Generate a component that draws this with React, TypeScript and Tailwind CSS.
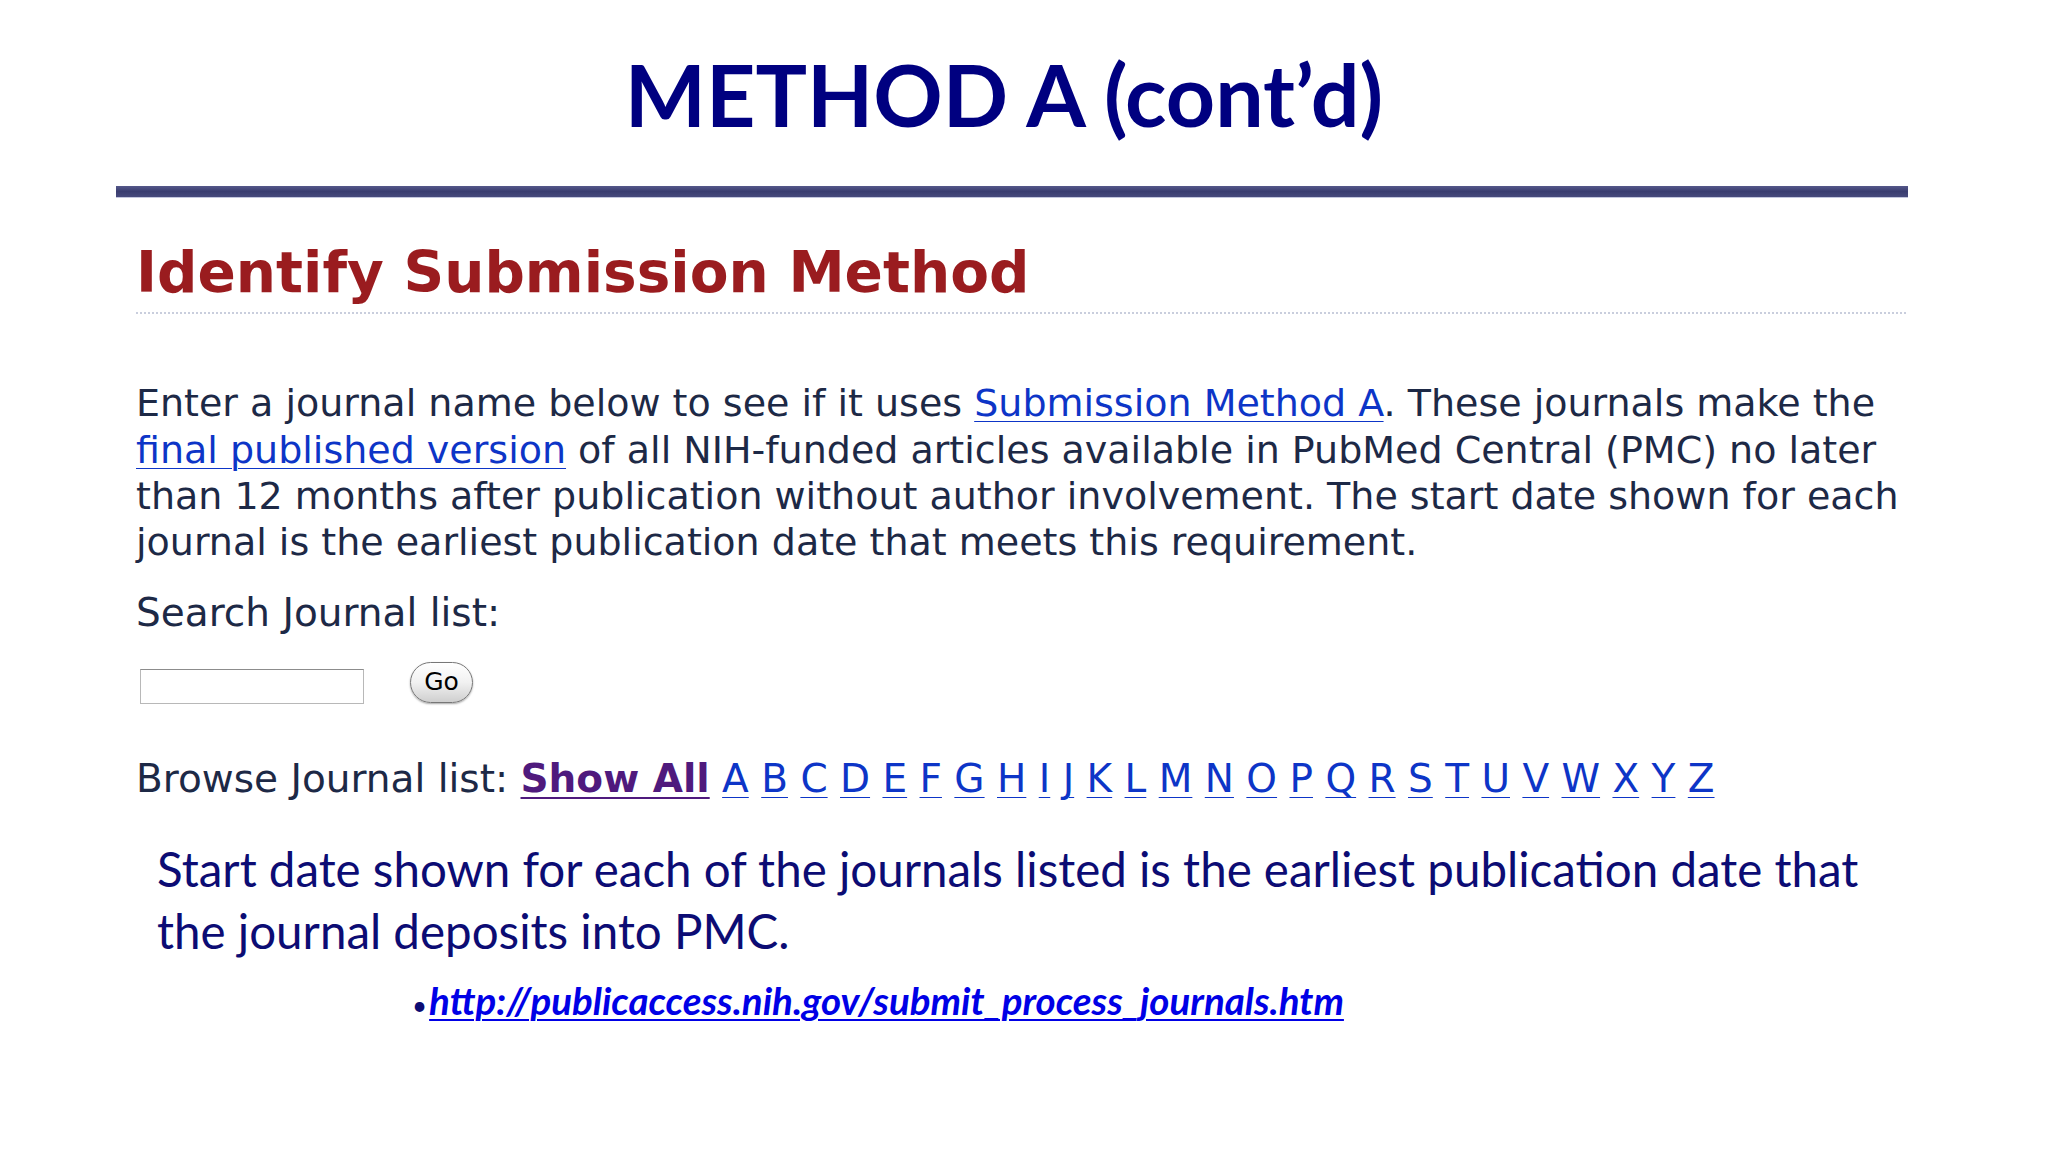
import React from "react";

const LETTERS = "ABCDEFGHIJKLMNOPQRSTUVWXYZ".split("");

function SearchBox() {
  return (
    <div className="mt-[26px] flex items-start">
      <input
        type="text"
        className="ml-[4px] mt-[7px] h-[35px] w-[224px] border border-[#b8b8b8] border-t-[#8c8c8c] bg-white outline-none"
      />
      <button className="ml-[46px] flex h-[41px] w-[63px] items-center justify-center rounded-full border border-[#777] bg-gradient-to-b from-white via-[#f1f1f1] to-[#cfcfcf] pb-px font-['DejaVu_Sans',sans-serif] text-[25px] text-black shadow-[0_1px_2px_rgba(0,0,0,0.35)]">
        Go
      </button>
    </div>
  );
}

function BrowseRow() {
  return (
    <div className="mt-[52px] whitespace-nowrap text-[39px] leading-[46.4px]">
      Browse Journal list:{" "}
      <a className="font-bold text-[#4f1a7d] underline decoration-2 underline-offset-[5px]">Show All</a>{" "}
      {LETTERS.map((l, i) => (
        <React.Fragment key={l}>
          <a className="text-[#0d35c7] underline decoration-1 underline-offset-[5px]">{l}</a>
          {i < LETTERS.length - 1 ? " " : ""}
        </React.Fragment>
      ))}
    </div>
  );
}

export default function App() {
  return (
    <div className="h-[1151px] w-[2048px] overflow-hidden bg-white">
      <h1 className="pr-[40px] pt-[42px] text-center font-['Lato',sans-serif] text-[86px] font-bold leading-[1.2] text-[#000080]">
        METHOD A (cont’d)
      </h1>

      <div className="ml-[116px] mt-[41px] h-[12px] w-[1792px] border-b border-[#c3c6de] bg-gradient-to-b from-[#55588a] via-[#3a3d70] to-[#474a7c]" />

      <div className="ml-[136px] w-[1770px] font-['DejaVu_Sans','Verdana',sans-serif] text-[#1d2946]">
        <h2 className="mt-[42px] border-b-2 border-dotted border-[#c9cedd] pb-[6px] text-[56.5px] font-bold leading-[66px] text-[#9a1c1f]">
          Identify Submission Method
        </h2>

        <p className="mt-[66px] whitespace-nowrap text-[38px] leading-[46.4px]">
          Enter a journal name below to see if it uses{" "}
          <a className="text-[#0d35c7] underline decoration-1 underline-offset-[5px]">Submission Method A</a>. These
          journals make the
          <br />
          <a className="text-[#0d35c7] underline decoration-1 underline-offset-[5px]">final published version</a> of all
          NIH-funded articles available in PubMed Central (PMC) no later
          <br />
          than 12 months after publication without author involvement. The start date shown for each
          <br />
          journal is the earliest publication date that meets this requirement.
        </p>

        <div className="mt-[24px] text-[39px] leading-[46.4px]">Search Journal list:</div>

        <SearchBox />

        <BrowseRow />

        <div className="ml-[21px] mt-[35px] font-['Lato',sans-serif] text-[47.5px] leading-[62px] text-[#0c0c74]">
          Start date shown for each of the journals listed is the earliest publication date that
          <br />
          the journal deposits into PMC.
        </div>

        <div className="ml-[276px] mt-[18px] flex items-baseline font-['Lato',sans-serif] leading-[40px] text-[#0c0c74]">
          <span className="mr-[2px] text-[26px]">•</span>
          <a className="text-[38.5px] font-bold italic text-[#0000e6] underline decoration-2 underline-offset-[4px]">
            http://publicaccess.nih.gov/submit_process_journals.htm
          </a>
        </div>
      </div>
    </div>
  );
}
